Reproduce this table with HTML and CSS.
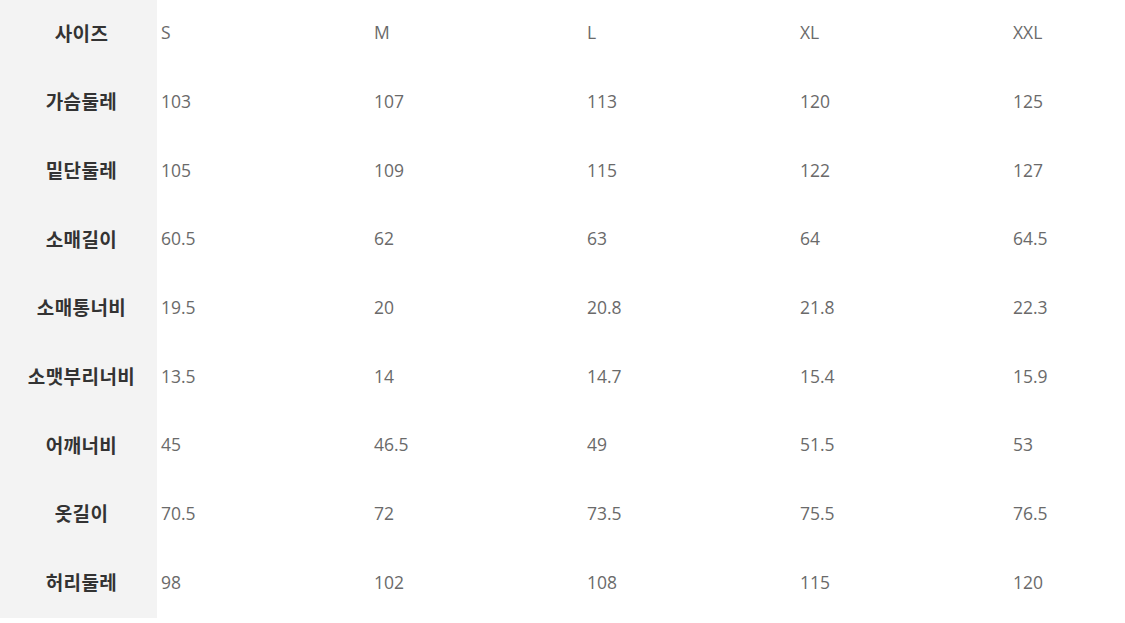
FILE: index.html
```html
<!DOCTYPE html>
<html lang="ko">
<head>
<meta charset="utf-8">
<link rel="stylesheet" href="styles.css">
</head>
<body>
<div class="table">
  <div class="th">사이즈</div><div class="td">S</div><div class="td">M</div><div class="td">L</div><div class="td">XL</div><div class="td">XXL</div>
  <div class="th">가슴둘레</div><div class="td">103</div><div class="td">107</div><div class="td">113</div><div class="td">120</div><div class="td">125</div>
  <div class="th">밑단둘레</div><div class="td">105</div><div class="td">109</div><div class="td">115</div><div class="td">122</div><div class="td">127</div>
  <div class="th">소매길이</div><div class="td">60.5</div><div class="td">62</div><div class="td">63</div><div class="td">64</div><div class="td">64.5</div>
  <div class="th">소매통너비</div><div class="td">19.5</div><div class="td">20</div><div class="td">20.8</div><div class="td">21.8</div><div class="td">22.3</div>
  <div class="th">소맷부리너비</div><div class="td">13.5</div><div class="td">14</div><div class="td">14.7</div><div class="td">15.4</div><div class="td">15.9</div>
  <div class="th">어깨너비</div><div class="td">45</div><div class="td">46.5</div><div class="td">49</div><div class="td">51.5</div><div class="td">53</div>
  <div class="th">옷길이</div><div class="td">70.5</div><div class="td">72</div><div class="td">73.5</div><div class="td">75.5</div><div class="td">76.5</div>
  <div class="th">허리둘레</div><div class="td">98</div><div class="td">102</div><div class="td">108</div><div class="td">115</div><div class="td">120</div>
</div>
</body>
</html>
```
FILE: styles.css
```css
html, body {
  margin: 0;
  padding: 0;
  background: #fff;
  overflow: hidden;
}
.table {
  display: grid;
  grid-template-columns: 157px repeat(4, 213px) 1fr;
  grid-template-rows: repeat(9, 68.67px);
  width: 100%;
}
.th {
  background: #f3f3f3;
  display: flex;
  align-items: center;
  justify-content: center;
  padding: 0 0 4px 6px;
  font-family: "Noto Sans CJK KR", "Noto Sans", sans-serif;
  font-weight: 700;
  font-size: 19px;
  letter-spacing: 0.4px;
  color: #333;
}
.td {
  display: flex;
  align-items: center;
  padding: 0 0 4px 4px;
  font-family: "Open Sans", "Noto Sans", sans-serif;
  font-size: 17.5px;
  color: #6a6a6a;
}
```
